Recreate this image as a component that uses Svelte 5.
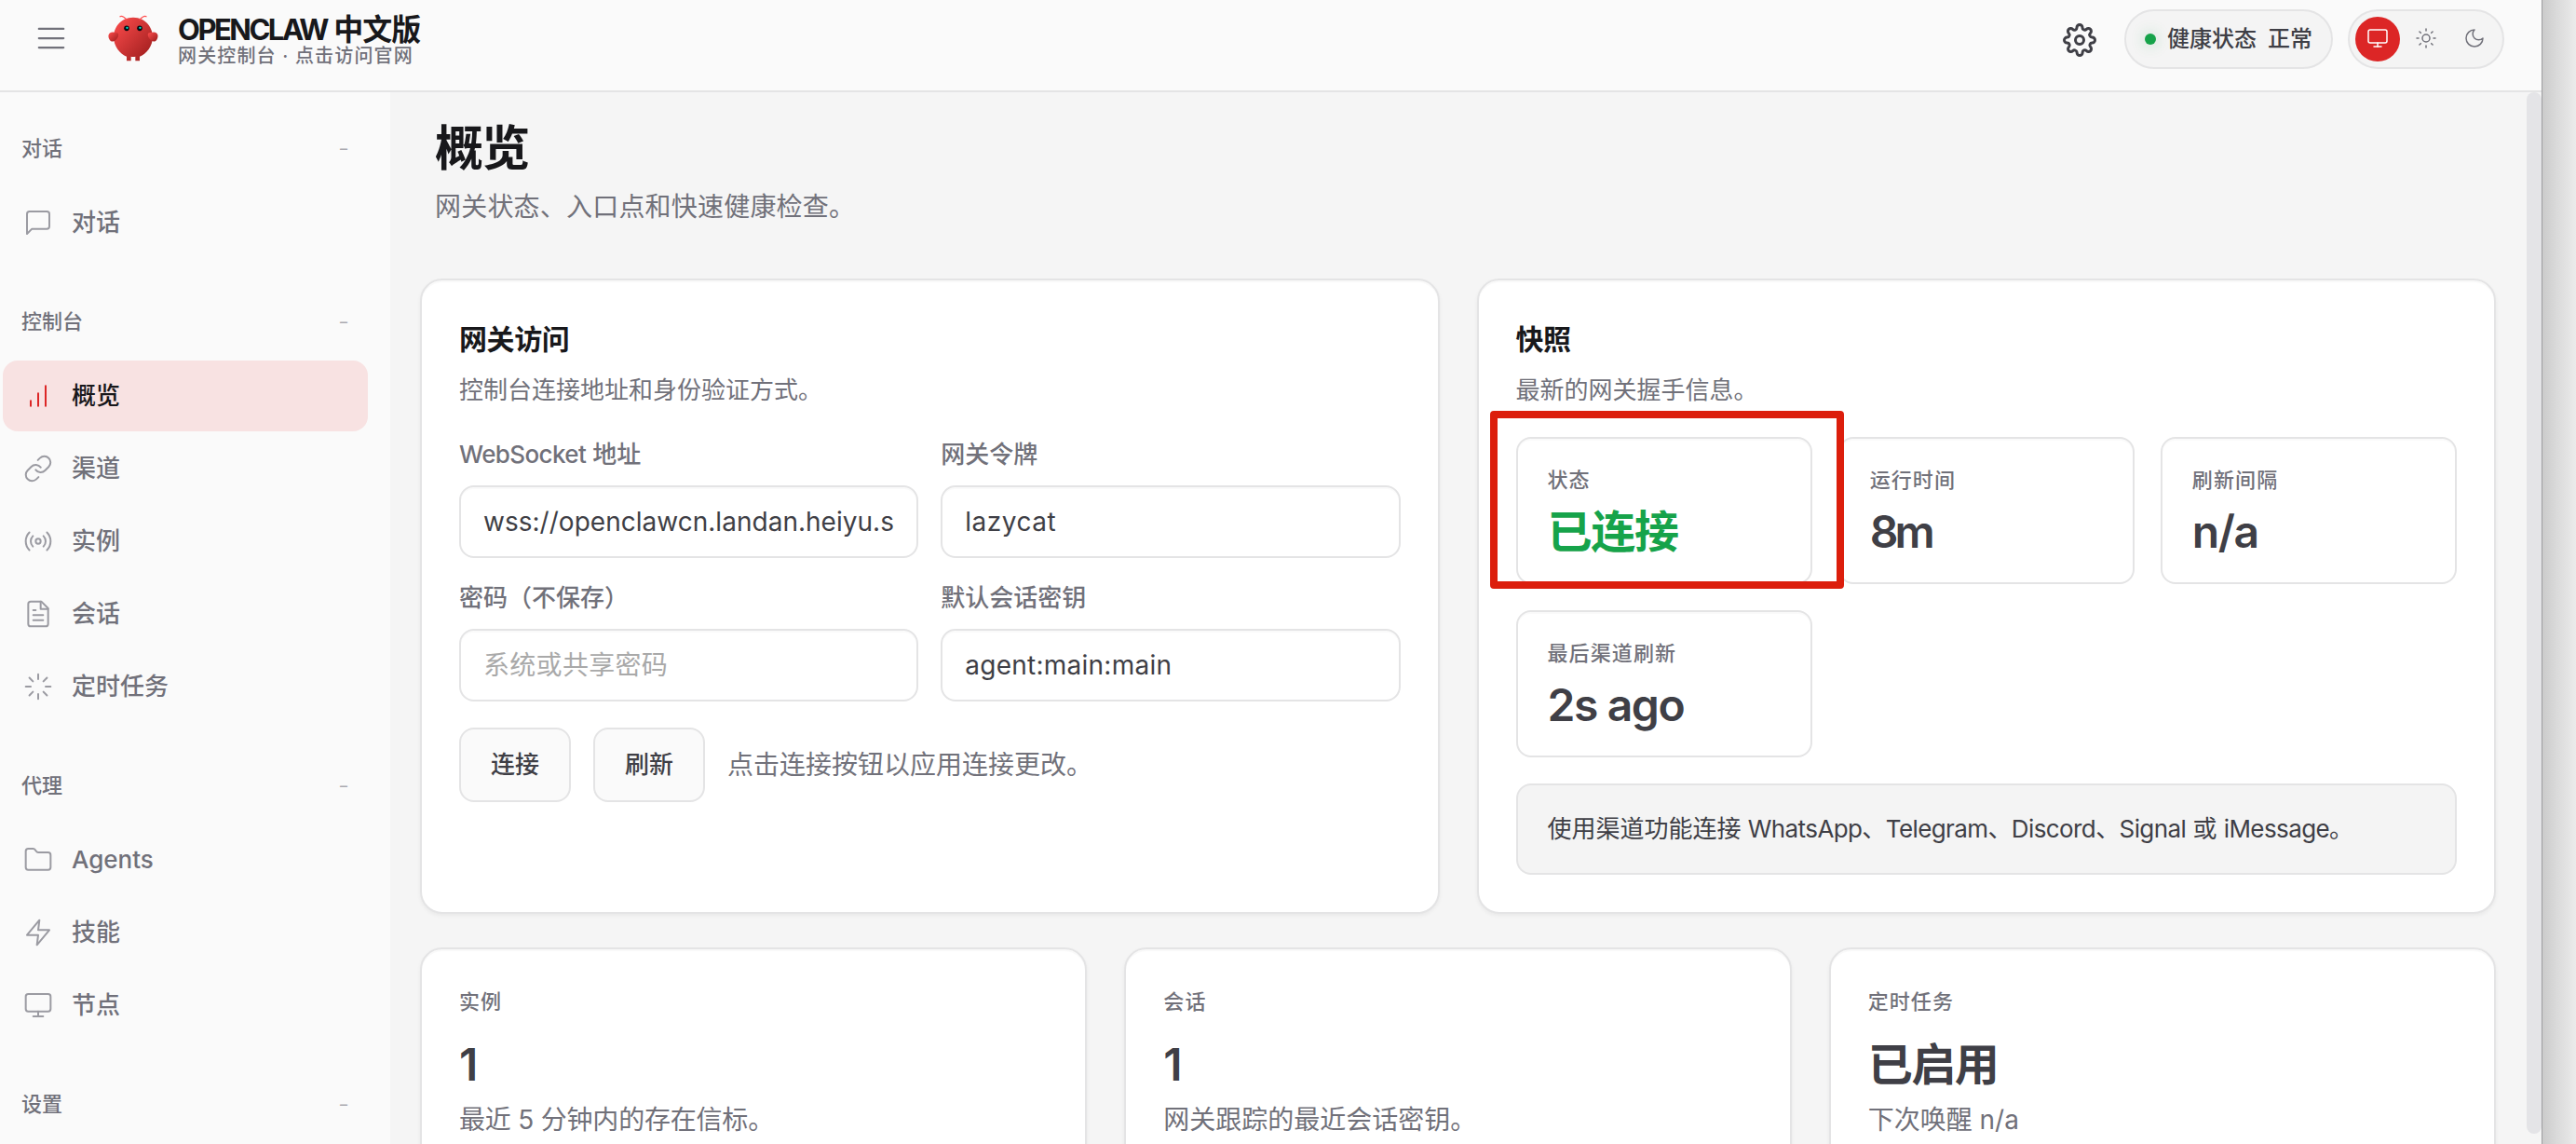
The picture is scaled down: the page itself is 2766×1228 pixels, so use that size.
<script>
  const groups = [
    { label: '对话', items: [{ icon: 'chat', text: '对话' }] },
    {
      label: '控制台',
      items: [
        { icon: 'bars', text: '概览', active: true },
        { icon: 'link', text: '渠道' },
        { icon: 'radio', text: '实例' },
        { icon: 'file', text: '会话' },
        { icon: 'loader', text: '定时任务' }
      ]
    },
    {
      label: '代理',
      items: [
        { icon: 'folder', text: 'Agents' },
        { icon: 'zap', text: '技能' },
        { icon: 'monitor', text: '节点' }
      ]
    },
    { label: '设置', items: [] }
  ];

  const icons = {
    chat: ['M21 15a2 2 0 0 1-2 2H7l-4 4V5a2 2 0 0 1 2-2h14a2 2 0 0 1 2 2z'],
    bars: ['M6 20v-4', 'M12 20V10', 'M18 20V4'],
    link: [
      'M10 13a5 5 0 0 0 7.54.54l3-3a5 5 0 0 0-7.07-7.07l-1.72 1.71',
      'M14 11a5 5 0 0 0-7.54-.54l-3 3a5 5 0 0 0 7.07 7.07l1.71-1.71'
    ],
    radio: [
      'M14 12a2 2 0 1 1-4 0a2 2 0 1 1 4 0',
      'M16.24 7.76a6 6 0 0 1 0 8.49',
      'M7.76 16.24a6 6 0 0 1 0-8.49',
      'M19.07 4.93a10 10 0 0 1 0 14.14',
      'M4.93 19.07a10 10 0 0 1 0-14.14'
    ],
    file: [
      'M14.5 2H6a2 2 0 0 0-2 2v16a2 2 0 0 0 2 2h12a2 2 0 0 0 2-2V7.5L14.5 2z',
      'M14 2v6h6',
      'M16 13H8',
      'M16 17H8',
      'M10 9H8'
    ],
    loader: [
      'M12 2v4', 'M12 18v4', 'm4.93 4.93 2.83 2.83', 'm16.24 16.24 2.83 2.83',
      'M2 12h4', 'M18 12h4', 'm4.93 19.07 2.83-2.83', 'm16.24 7.76 2.83-2.83'
    ],
    folder: ['M4 20h16a2 2 0 0 0 2-2V8a2 2 0 0 0-2-2h-7.93a2 2 0 0 1-1.66-.9l-.82-1.2A2 2 0 0 0 7.93 3H4a2 2 0 0 0-2 2v13c0 1.1.9 2 2 2Z'],
    zap: ['M13 2 3 14h9l-1 8 10-12h-9l1-8z'],
    monitor: ['M4 3h16a2 2 0 0 1 2 2v10a2 2 0 0 1-2 2H4a2 2 0 0 1-2-2V5a2 2 0 0 1 2-2z', 'M8 21h8', 'M12 17v4'],
    sun: [
      'M16 12a4 4 0 1 1-8 0a4 4 0 1 1 8 0',
      'M12 2v2', 'M12 20v2', 'm4.93 4.93 1.41 1.41', 'm17.66 17.66 1.41 1.41',
      'M2 12h2', 'M20 12h2', 'm6.34 17.66-1.41 1.41', 'm19.07 4.93-1.41 1.41'
    ],
    moon: ['M12 3a6 6 0 0 0 9 9 9 9 0 1 1-9-9Z'],
    menu: ['M3.2 5.33h17.6', 'M3.2 12h17.6', 'M3.2 18.67h17.6'],
    gear: [
      'M15 12a3 3 0 1 1-6 0a3 3 0 1 1 6 0',
      'M19.4 15a1.65 1.65 0 0 0 .33 1.82l.06.06a2 2 0 0 1 0 2.83 2 2 0 0 1-2.83 0l-.06-.06a1.65 1.65 0 0 0-1.82-.33 1.65 1.65 0 0 0-1 1.51V21a2 2 0 0 1-2 2 2 2 0 0 1-2-2v-.09A1.65 1.65 0 0 0 9 19.4a1.65 1.65 0 0 0-1.82.33l-.06.06a2 2 0 0 1-2.83 0 2 2 0 0 1 0-2.83l.06-.06a1.65 1.65 0 0 0 .33-1.82 1.65 1.65 0 0 0-1.51-1H3a2 2 0 0 1-2-2 2 2 0 0 1 2-2h.09A1.65 1.65 0 0 0 4.6 9a1.65 1.65 0 0 0-.33-1.82l-.06-.06a2 2 0 0 1 0-2.83 2 2 0 0 1 2.83 0l.06.06a1.65 1.65 0 0 0 1.82.33H9a1.65 1.65 0 0 0 1-1.51V3a2 2 0 0 1 2-2 2 2 0 0 1 2 2v.09a1.65 1.65 0 0 0 1 1.51 1.65 1.65 0 0 0 1.82-.33l.06-.06a2 2 0 0 1 2.83 0 2 2 0 0 1 0 2.83l-.06.06a1.65 1.65 0 0 0-.33 1.82V9a1.65 1.65 0 0 0 1.51 1H21a2 2 0 0 1 2 2 2 2 0 0 1-2 2h-.09a1.65 1.65 0 0 0-1.51 1z'
    ]
  };

  const snapshot = [
    { label: '状态', value: '已连接', ok: true },
    { label: '运行时间', value: '8m', tight: true },
    { label: '刷新间隔', value: 'n/a' },
    { label: '最后渠道刷新', value: '2s ago' }
  ];
</script>

{#snippet icon(name)}
  <svg class="icon" viewBox="0 0 24 24" aria-hidden="true">
    {#each icons[name] as d}<path {d} />{/each}
  </svg>
{/snippet}

<div class="screen">
  <div class="window">
    <header class="topbar">
      <button class="menu" aria-label="菜单">{@render icon('menu')}</button>
      <svg class="logo" viewBox="0 0 120 120" aria-hidden="true">
        <defs>
          <linearGradient id="shell" x1="0" y1="0" x2="1" y2="1">
            <stop offset="0" stop-color="#ff4d4d" />
            <stop offset="1" stop-color="#991b1b" />
          </linearGradient>
        </defs>
        <path fill="url(#shell)" d="M60 10C30 10 15 35 15 55C15 75 30 95 45 100L45 110L55 110L55 100C55 100 60 102 65 100L65 110L75 110L75 100C90 95 105 75 105 55C105 35 90 10 60 10Z" />
        <path fill="url(#shell)" d="M20 45C5 40 0 50 5 60C10 70 20 65 25 55C28 48 25 45 20 45Z" />
        <path fill="url(#shell)" d="M100 45C115 40 120 50 115 60C110 70 100 65 95 55C92 48 95 45 100 45Z" />
        <path class="feeler" d="M45 15Q35 5 30 8" />
        <path class="feeler" d="M75 15Q85 5 90 8" />
        <circle cx="45" cy="35" r="6" fill="#050810" />
        <circle cx="75" cy="35" r="6" fill="#050810" />
        <circle cx="46" cy="34" r="2.5" fill="#00e5cc" />
        <circle cx="76" cy="34" r="2.5" fill="#00e5cc" />
      </svg>
      <div class="brand">
        <div class="brand-name"><span class="latin">OPENCLAW</span> 中文版</div>
        <div class="brand-sub">网关控制台 · 点击访问官网</div>
      </div>
      <div class="tools">
        <button class="gear" aria-label="设置">{@render icon('gear')}</button>
        <div class="health"><i class="dot"></i><span>健康状态</span><span>正常</span></div>
        <div class="themes">
          <button class="theme on" aria-label="跟随系统">{@render icon('monitor')}</button>
          <button class="theme" aria-label="浅色">{@render icon('sun')}</button>
          <button class="theme" aria-label="深色">{@render icon('moon')}</button>
        </div>
      </div>
    </header>

    <div class="body">
      <nav class="sidebar">
        {#each groups as group}
          <section class="group">
            <div class="group-head"><span>{group.label}</span><span class="fold">–</span></div>
            <div class="items">
              {#each group.items as item}
                <div class="item" class:active={item.active}>{@render icon(item.icon)}<span>{item.text}</span></div>
              {/each}
            </div>
          </section>
        {/each}
      </nav>

      <main class="content">
        <div class="page-head">
          <h1>概览</h1>
          <p>网关状态、入口点和快速健康检查。</p>
        </div>

        <div class="row two">
          <section class="card">
            <h2>网关访问</h2>
            <p class="card-sub">控制台连接地址和身份验证方式。</p>
            <div class="form">
              <label class="field">
                <span><span class="ws">WebSocket</span> 地址</span>
                <div class="input"><span class="url">wss://openclawcn.landan.heiyu.s</span></div>
              </label>
              <label class="field">
                <span>网关令牌</span>
                <div class="input"><span class="token">lazycat</span></div>
              </label>
              <label class="field">
                <span>密码（不保存）</span>
                <div class="input placeholder"><span>系统或共享密码</span></div>
              </label>
              <label class="field">
                <span>默认会话密钥</span>
                <div class="input"><span class="key">agent:main:main</span></div>
              </label>
            </div>
            <div class="actions">
              <button class="btn">连接</button>
              <button class="btn">刷新</button>
              <span>点击连接按钮以应用连接更改。</span>
            </div>
          </section>

          <section class="card">
            <h2>快照</h2>
            <p class="card-sub">最新的网关握手信息。</p>
            <div class="snap">
              {#each snapshot as s}
                <div class="tile" class:marked={s.ok}>
                  <div class="label">{s.label}</div>
                  <div class="value" class:ok={s.ok} class:tight={s.tight}>{s.value}</div>
                </div>
              {/each}
            </div>
            <div class="callout">使用渠道功能连接 <span class="apps">WhatsApp、Telegram、Discord、Signal</span> 或 <span class="apps">iMessage</span>。</div>
          </section>
        </div>

        <div class="row three">
          <section class="card">
            <div class="label">实例</div>
            <div class="value">1</div>
            <p class="note recent">最近 5 分钟内的存在信标。</p>
          </section>
          <section class="card">
            <div class="label">会话</div>
            <div class="value">1</div>
            <p class="note">网关跟踪的最近会话密钥。</p>
          </section>
          <section class="card">
            <div class="label">定时任务</div>
            <div class="value">已启用</div>
            <p class="note">下次唤醒 n/a</p>
          </section>
        </div>
      </main>
      <div class="scrollbar"><i class="thumb"></i></div>
    </div>
  </div>
  <div class="backdrop"></div>
</div>

<style>
  :global(body) { margin: 0; overflow: hidden; }
  .screen, .screen * { box-sizing: border-box; }
  .screen {
    display: flex;
    width: 2766px;
    height: 1228px;
    overflow: hidden;
    font-family: Inter, "Noto Sans CJK SC", sans-serif;
    color: #3f3f46;
  }
  h1, h2, p { margin: 0; }
  button { font: inherit; color: inherit; padding: 0; border: 0; background: none; }
  .window { display: flex; flex-direction: column; width: 2729px; height: 1228px; background: #fafafa; }
  .backdrop {
    flex: 1;
    border-left: 1px solid #9d9da0;
    background: linear-gradient(90deg, #cbcbcb, #d9d9d9 40%, #ebebeb);
  }
  .icon {
    display: block;
    width: 32px;
    height: 32px;
    flex: none;
    fill: none;
    stroke: currentColor;
    stroke-width: 1.5;
    stroke-linecap: round;
    stroke-linejoin: round;
  }

  /* top bar */
  .topbar {
    display: flex;
    align-items: center;
    flex: none;
    height: 99px;
    padding: 0 40px 13px 37px;
    border-bottom: 2px solid #e4e4e5;
  }
  .menu { color: #71717a; padding-bottom: 2px; }
  .menu .icon { width: 36px; height: 36px; }
  .logo { display: block; width: 56px; height: 56px; margin-left: 42px; overflow: visible; }
  .feeler { fill: none; stroke: #ff4d4d; stroke-width: 3; stroke-linecap: round; }
  .brand { margin-left: 20px; padding-top: 1px; white-space: nowrap; }
  .brand-name { font-size: 32px; line-height: 34px; font-weight: 600; color: #18181b; letter-spacing: -0.9px; }
  .brand-name .latin { font-size: 31px; font-weight: 700; letter-spacing: -2.5px; }
  .brand-sub { font-size: 20px; line-height: 22px; font-weight: 500; color: #71717a; letter-spacing: 1.15px; }
  .tools { display: flex; align-items: center; margin-left: auto; }
  .gear { padding-top: 2px; }
  .gear .icon { width: 36px; height: 36px; stroke-width: 2; }
  .health {
    display: flex;
    align-items: center;
    gap: 12px;
    width: 224px;
    height: 64px;
    margin-left: 30px;
    padding-left: 20px;
    border: 2px solid #e4e4e5;
    border-radius: 32px;
    background: #f4f4f4;
    font-size: 24px;
    line-height: 32px;
    font-weight: 500;
    white-space: nowrap;
  }
  .dot { width: 12px; height: 12px; border-radius: 50%; background: #16a34a; box-shadow: 0 0 16px rgba(22, 163, 74, 0.3); }
  .themes {
    display: flex;
    gap: 4px;
    height: 64px;
    margin-left: 16px;
    padding: 6px;
    border: 2px solid #e4e4e5;
    border-radius: 32px;
    background: #f4f4f4;
  }
  .theme {
    display: flex;
    align-items: center;
    justify-content: center;
    width: 48px;
    height: 48px;
    padding-bottom: 2px;
    border-radius: 50%;
    color: #71717a;
  }
  .theme .icon { width: 24px; height: 24px; }
  .theme.on { background: #dc2626; color: #fff; }

  /* navigation */
  .body { display: flex; flex: 1; min-height: 0; }
  .sidebar { flex: none; width: 419px; padding: 36px 24px 0 3px; overflow: hidden; }
  .group { margin-bottom: 44px; }
  .group-head {
    display: flex;
    align-items: center;
    justify-content: space-between;
    height: 50px;
    margin-bottom: 16px;
    padding: 0 22px 2px 20px;
    font-size: 22px;
    line-height: 32px;
    font-weight: 500;
    color: #71717a;
  }
  .fold { font-size: 16px; line-height: 32px; color: #a9a9af; }
  .items { display: flex; flex-direction: column; gap: 2px; }
  .item {
    display: flex;
    align-items: center;
    gap: 20px;
    height: 76px;
    padding-left: 22px;
    border-radius: 16px;
    font-size: 26px;
    line-height: 36px;
    font-weight: 500;
    color: #71717a;
  }
  .item .icon { color: #9b9ba2; }
  .item.active { background: #f8e2e2; color: #18181b; }
  .item.active .icon { color: #dc2626; }

  /* page */
  .content { flex: 1; min-width: 0; padding: 31px 33px 0 32px; background: #f5f5f5; overflow: hidden; }
  .page-head { padding-left: 16px; margin-bottom: 59px; }
  h1 { font-size: 52px; line-height: 60px; font-weight: 600; letter-spacing: -1.8px; color: #18181b; }
  .page-head p { margin-top: 14px; font-size: 28px; line-height: 36px; color: #71717a; letter-spacing: 0.2px; }
  .row { display: grid; gap: 40px; }
  .two { grid-template-columns: 1fr 1fr; margin-bottom: 36px; }
  .three { grid-template-columns: 1fr 1fr 1fr; }
  .card {
    padding: 40px;
    border: 2px solid #e4e4e5;
    border-radius: 24px;
    background: #fff;
    box-shadow: 0 2px 4px rgba(0, 0, 0, 0.05), inset 0 2px 0 rgba(0, 0, 0, 0.025);
  }
  h2 { font-size: 30px; line-height: 46px; font-weight: 600; letter-spacing: -0.4px; color: #18181b; }
  .card-sub { margin: 13px 0 31px; font-size: 26px; line-height: 38px; color: #71717a; }
  .form { display: grid; grid-template-columns: 1fr 1fr; gap: 24px; }
  .field { display: flex; flex-direction: column; gap: 14px; min-width: 0; font-size: 26px; line-height: 38px; font-weight: 500; color: #71717a; }
  .input {
    height: 78px;
    padding: 0 24px;
    border: 2px solid #e4e4e5;
    border-radius: 16px;
    box-shadow: inset 0 2px 0 rgba(0, 0, 0, 0.02);
    font-size: 28px;
    line-height: 74px;
    font-weight: 400;
    color: #3f3f46;
  }
  .input span { display: block; overflow: hidden; white-space: nowrap; }
  .ws { letter-spacing: -0.6px; }
  .url { letter-spacing: 0.02px; }
  .token { letter-spacing: 0.5px; }
  .key { letter-spacing: 0.25px; }
  .placeholder { color: #a9a9a9; letter-spacing: 0.3px; }
  .actions { display: flex; align-items: center; gap: 24px; margin-top: 28px; font-size: 28px; line-height: 40px; color: #71717a; }
  .btn {
    width: 120px;
    height: 80px;
    padding-bottom: 1px;
    border: 2px solid #e4e4e5;
    border-radius: 16px;
    background: #fafafa;
    font-size: 26px;
    line-height: 36px;
    font-weight: 500;
    color: #3f3f46;
  }
  .snap { display: grid; grid-template-columns: repeat(3, 1fr); gap: 28px; }
  .tile { position: relative; height: 158px; padding: 28px 32px; border: 2px solid #e4e4e5; border-radius: 16px; box-shadow: inset 0 2px 0 rgba(0, 0, 0, 0.02); }
  .tile .value { margin-top: 12px; }
  /* highlight frame laid over the status tile */
  .marked::after {
    content: "";
    position: absolute;
    z-index: 1;
    inset: -30px -36px -7px -30px;
    border: 8px solid #dc1e0c;
    border-radius: 4px;
  }
  .label { font-size: 22px; line-height: 32px; font-weight: 500; letter-spacing: 1.1px; color: #71717a; }
  .value { font-size: 48px; line-height: 56px; font-weight: 600; letter-spacing: -1.4px; color: #3f3f46; }
  .value.ok { color: #16a34a; letter-spacing: -1.2px; }
  .value.tight { letter-spacing: -4px; }
  .callout {
    height: 98px;
    margin-top: 28px;
    padding: 0 32px;
    border: 2px solid #e4e4e5;
    border-radius: 16px;
    background: #f4f4f4;
    font-size: 26px;
    line-height: 94px;
    white-space: nowrap;
  }
  .apps { letter-spacing: -0.6px; }
  .three .card { height: 320px; }
  .three .value { margin-top: 24px; }
  .note { margin-top: 11px; font-size: 28px; line-height: 40px; color: #71717a; }
  .recent { letter-spacing: -0.2px; }
  .scrollbar { flex: none; width: 16px; background: #f5f5f5; }
  .thumb { display: block; height: 1118px; border-radius: 8px; background: #e4e4e7; }
</style>
